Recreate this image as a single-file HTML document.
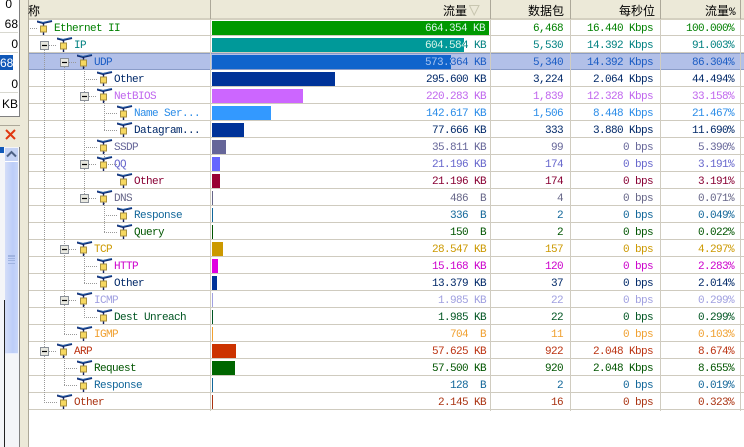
<!DOCTYPE html>
<html><head><meta charset="utf-8"><style>
html,body{margin:0;padding:0;background:#fff}
#p{position:relative;width:744px;height:447px;overflow:hidden;background:#fff;font:11px/17px "Liberation Mono","Noto Sans CJK SC",monospace;letter-spacing:-.6px}
#p div,#p svg{position:absolute}
.h{top:2px;height:17px;font:12px/17px "Noto Sans CJK SC","WenQuanYi Zen Hei",sans-serif;letter-spacing:0;color:#000;white-space:nowrap}
.r{left:29px;width:715px;height:16px;border-bottom:1px solid #cfcbbf}
.in{left:-29px;top:0;width:744px;height:16px}
.n,.a,.b2,.c,.d{white-space:pre;top:2px}
.a{right:258px}.b2{right:181px}.c{right:91px}.d{right:10px}
.bar{left:212px;top:2px;height:14px;overflow:hidden}
.bar span{position:absolute;left:213px;top:0;white-space:pre;color:#d8f4e8}
.vl{top:19px;width:1px;height:392px;background:#d0ccc0}
.hs{top:0;width:1px;height:19px;background:#aca899}
.lp{left:0;width:18px;height:16px;border-bottom:1px solid #d8d8d0;text-align:right;font:12px/17px "Liberation Sans",sans-serif;letter-spacing:0;color:#000}
</style></head><body><div id="p">
<svg width="0" height="0"><defs>
<symbol id="i" viewBox="0 0 16 16"><path d="M0 1.5 L6 3 L15 1" fill="none" stroke="#102a70" stroke-width="2"/><path d="M1 1 L6 2.5 L15 .5" fill="none" stroke="#3a8ad0" stroke-width=".5"/><path d="M6.5 3 V15" stroke="#102060" stroke-width="1.4"/><rect x="3.5" y="6" width="6" height="6" fill="#f6d860" stroke="#a89040"/></symbol>
<symbol id="m" viewBox="0 0 9 9"><rect x=".5" y=".5" width="8" height="8" fill="#e8e8e0" stroke="#8a9098"/><path d="M2 4.5H7" stroke="#000" stroke-width="1.2"/></symbol>
</defs></svg>

<!-- left panel -->
<div style="left:0;top:0;width:20px;height:447px;background:#ece9d8"></div>
<div style="left:0;top:0;width:19px;height:116px;background:#fff;border-right:1px solid #808080;border-bottom:1px solid #808080"></div>
<div class="lp" style="top:-4px;text-align:right;padding-right:1px;width:12px;left:0;border:0">0</div>
<div class="lp" style="top:16px;">68</div>
<div class="lp" style="top:36px">0</div>
<div class="lp" style="top:55px;background:#1058b8;color:#fff;width:13px;height:15px;left:0;border:0;line-height:16px">68</div>
<div class="lp" style="top:76px">0</div>
<div class="lp" style="top:96px;border:0">KB</div>
<div style="left:0;top:125px;width:20px;height:20px;background:#ece9d8;border-top:1px solid #aca899;border-right:1px solid #808080"></div>
<svg style="left:5px;top:129px" width="11" height="11" viewBox="0 0 11 11"><path d="M1 1L10 10M10 1L1 10" stroke="#e03810" stroke-width="2"/></svg>
<div style="left:0;top:147px;width:19px;height:300px;background:#f4f5f8;border-right:1px solid #808080"></div>
<div style="left:0;top:147px;width:4px;height:6px;background:#1058b8"></div>
<div style="left:4px;top:300px;width:1px;height:147px;background:#222"></div>
<div style="left:5px;top:148px;width:13px;height:205px;background:linear-gradient(90deg,#d4ddf8,#bccdf8 60%,#c8d6f8);border-bottom:1px solid #e8eeff"></div>
<div style="left:5px;top:148px;width:13px;height:13px;background:#c4d2f4;border-bottom:1px solid #fff"></div>
<svg style="left:6px;top:150px" width="11" height="8" viewBox="0 0 11 8"><path d="M1 6.5L5.5 2L10 6.5" fill="none" stroke="#4d6185" stroke-width="2"/></svg>
<div style="left:8px;top:255px;width:7px;height:7px;border-top:1px solid #9fb3e0;border-bottom:1px solid #9fb3e0;background:linear-gradient(#9fb3e0 0 1px,transparent 1px 2px,#9fb3e0 2px 3px,transparent 3px 4px,#9fb3e0 4px 5px,transparent 5px)"></div>
<div style="left:20px;top:0;width:8px;height:447px;background:#ece9d8;border-right:1px solid #aca899"></div>

<!-- header -->
<div style="left:29px;top:0;width:715px;height:18px;background:#ece9d8;border-bottom:2px solid #d4d0c0"></div>
<div class="hs" style="left:210px"></div><div class="hs" style="left:490px"></div><div class="hs" style="left:570px"></div><div class="hs" style="left:660px"></div><div class="hs" style="left:740px"></div>
<div class="h" style="left:28px">称</div>
<div class="h" style="left:443px">流量</div>
<svg style="left:469px;top:5px" width="11" height="11" viewBox="0 0 11 11"><path d="M.5 .5H10L5.2 10Z" fill="none" stroke="#c8c6b0"/></svg>
<div class="h" style="left:528px">数据包</div>
<div class="h" style="left:619px">每秒位</div>
<div class="h" style="left:705px">流量<span style="font:11px/17px 'Liberation Mono',monospace;letter-spacing:-.6px">%</span></div>

<!-- rows -->
<div class="r" style="top:19px;color:#008000"><div class="in"><div class="n" style="left:54px">Ethernet II</div><div class="a">664.354 KB</div><div class="bar" style="width:277px;background:#009900"><span>664.354 KB</span></div><div class="b2">6,468</div><div class="c">16.440 Kbps</div><div class="d">100.000%</div></div></div>
<div class="r" style="top:36px;color:#008080"><div class="in"><div class="n" style="left:74px">IP</div><div class="a">604.584 KB</div><div class="bar" style="width:252px;background:#009999"><span>604.584 KB</span></div><div class="b2">5,530</div><div class="c">14.392 Kbps</div><div class="d">91.003%</div></div></div>
<div class="r" style="top:53px;color:#1a5cc4;background:#b2c0e8;border-top:1px solid #8a9cc8;border-bottom:1px solid #8a9cc8;height:15px"><div class="in" style="top:-1px"><div class="n" style="left:94px">UDP</div><div class="a">573.364 KB</div><div class="bar" style="width:239px;background:#1064cc"><span style="color:#a8c4f0">573.364 KB</span></div><div class="b2">5,340</div><div class="c">14.392 Kbps</div><div class="d">86.304%</div></div></div>
<div class="r" style="top:70px;color:#002868"><div class="in"><div class="n" style="left:114px">Other</div><div class="a">295.600 KB</div><div class="bar" style="width:123px;background:#003399"></div><div class="b2">3,224</div><div class="c">2.064 Kbps</div><div class="d">44.494%</div></div></div>
<div class="r" style="top:87px;color:#c066ee"><div class="in"><div class="n" style="left:114px">NetBIOS</div><div class="a">220.283 KB</div><div class="bar" style="width:91px;background:#cc66ff"></div><div class="b2">1,839</div><div class="c">12.328 Kbps</div><div class="d">33.158%</div></div></div>
<div class="r" style="top:104px;color:#2a8ce8"><div class="in"><div class="n" style="left:134px">Name Ser...</div><div class="a">142.617 KB</div><div class="bar" style="width:59px;background:#3399ff"></div><div class="b2">1,506</div><div class="c">8.448 Kbps</div><div class="d">21.467%</div></div></div>
<div class="r" style="top:121px;color:#002868"><div class="in"><div class="n" style="left:134px">Datagram...</div><div class="a">77.666 KB</div><div class="bar" style="width:32px;background:#003399"></div><div class="b2">333</div><div class="c">3.880 Kbps</div><div class="d">11.690%</div></div></div>
<div class="r" style="top:138px;color:#666699"><div class="in"><div class="n" style="left:114px">SSDP</div><div class="a">35.811 KB</div><div class="bar" style="width:14px;background:#666699"></div><div class="b2">99</div><div class="c">0 bps</div><div class="d">5.390%</div></div></div>
<div class="r" style="top:155px;color:#6666cc"><div class="in"><div class="n" style="left:114px">QQ</div><div class="a">21.196 KB</div><div class="bar" style="width:8px;background:#6666ff"></div><div class="b2">174</div><div class="c">0 bps</div><div class="d">3.191%</div></div></div>
<div class="r" style="top:172px;color:#880033"><div class="in"><div class="n" style="left:134px">Other</div><div class="a">21.196 KB</div><div class="bar" style="width:8px;background:#990033"></div><div class="b2">174</div><div class="c">0 bps</div><div class="d">3.191%</div></div></div>
<div class="r" style="top:189px;color:#666688"><div class="in"><div class="n" style="left:114px">DNS</div><div class="a">486  B</div><div class="bar" style="width:1px;background:#666688"></div><div class="b2">4</div><div class="c">0 bps</div><div class="d">0.071%</div></div></div>
<div class="r" style="top:206px;color:#116699"><div class="in"><div class="n" style="left:134px">Response</div><div class="a">336  B</div><div class="bar" style="width:1px;background:#116699"></div><div class="b2">2</div><div class="c">0 bps</div><div class="d">0.049%</div></div></div>
<div class="r" style="top:223px;color:#005500"><div class="in"><div class="n" style="left:134px">Query</div><div class="a">150  B</div><div class="bar" style="width:1px;background:#005500"></div><div class="b2">2</div><div class="c">0 bps</div><div class="d">0.022%</div></div></div>
<div class="r" style="top:240px;color:#cc9900"><div class="in"><div class="n" style="left:94px">TCP</div><div class="a">28.547 KB</div><div class="bar" style="width:11px;background:#cc9900"></div><div class="b2">157</div><div class="c">0 bps</div><div class="d">4.297%</div></div></div>
<div class="r" style="top:257px;color:#cc00cc"><div class="in"><div class="n" style="left:114px">HTTP</div><div class="a">15.168 KB</div><div class="bar" style="width:6px;background:#e000e0"></div><div class="b2">120</div><div class="c">0 bps</div><div class="d">2.283%</div></div></div>
<div class="r" style="top:274px;color:#002868"><div class="in"><div class="n" style="left:114px">Other</div><div class="a">13.379 KB</div><div class="bar" style="width:5px;background:#003399"></div><div class="b2">37</div><div class="c">0 bps</div><div class="d">2.014%</div></div></div>
<div class="r" style="top:291px;color:#a0a0e0"><div class="in"><div class="n" style="left:94px">ICMP</div><div class="a">1.985 KB</div><div class="bar" style="width:1px;background:#a0a0e0"></div><div class="b2">22</div><div class="c">0 bps</div><div class="d">0.299%</div></div></div>
<div class="r" style="top:308px;color:#005522"><div class="in"><div class="n" style="left:114px">Dest Unreach</div><div class="a">1.985 KB</div><div class="bar" style="width:1px;background:#005522"></div><div class="b2">22</div><div class="c">0 bps</div><div class="d">0.299%</div></div></div>
<div class="r" style="top:325px;color:#f0a030"><div class="in"><div class="n" style="left:94px">IGMP</div><div class="a">704  B</div><div class="bar" style="width:1px;background:#f0a030"></div><div class="b2">11</div><div class="c">0 bps</div><div class="d">0.103%</div></div></div>
<div class="r" style="top:342px;color:#bb3311"><div class="in"><div class="n" style="left:74px">ARP</div><div class="a">57.625 KB</div><div class="bar" style="width:24px;background:#cc3300"></div><div class="b2">922</div><div class="c">2.048 Kbps</div><div class="d">8.674%</div></div></div>
<div class="r" style="top:359px;color:#005500"><div class="in"><div class="n" style="left:94px">Request</div><div class="a">57.500 KB</div><div class="bar" style="width:23px;background:#006600"></div><div class="b2">920</div><div class="c">2.048 Kbps</div><div class="d">8.655%</div></div></div>
<div class="r" style="top:376px;color:#116699"><div class="in"><div class="n" style="left:94px">Response</div><div class="a">128  B</div><div class="bar" style="width:1px;background:#116699"></div><div class="b2">2</div><div class="c">0 bps</div><div class="d">0.019%</div></div></div>
<div class="r" style="top:393px;color:#aa3311"><div class="in"><div class="n" style="left:74px">Other</div><div class="a">2.145 KB</div><div class="bar" style="width:1px;background:#aa3311"></div><div class="b2">16</div><div class="c">0 bps</div><div class="d">0.323%</div></div></div>

<div class="vl" style="left:210px"></div><div class="vl" style="left:490px"></div><div class="vl" style="left:570px"></div><div class="vl" style="left:660px"></div><div class="vl" style="left:740px"></div>

<!-- tree -->
<svg style="left:0;top:0" width="210" height="447" viewBox="0 0 210 447">
<g stroke="#999" stroke-width="1" stroke-dasharray="1 1" fill="none" shape-rendering="crispEdges">
<path d="M44.5 50V402M64.5 67V334M64.5 356V385M84.5 67V198M84.5 254V283M84.5 305V317M104.5 101V130M104.5 152V164M104.5 203V232"/>
<path d="M30 28.5H37M49 45.5H57M44 402.5H57M69 62.5H77M64 334.5H77M49 351.5H57M64 368.5H77M64 385.5H77M69 249.5H77M69 300.5H77M84 79.5H97M89 96.5H97M84 147.5H97M89 164.5H97M89 198.5H97M84 266.5H97M84 283.5H97M84 317.5H97M104 113.5H117M104 130.5H117M104 164.5H117M104 215.5H117M104 232.5H117"/>
</g>
<use href="#m" x="40" y="41" width="9" height="9"/><use href="#m" x="60" y="58" width="9" height="9"/><use href="#m" x="80" y="92" width="9" height="9"/><use href="#m" x="80" y="160" width="9" height="9"/><use href="#m" x="80" y="194" width="9" height="9"/><use href="#m" x="60" y="245" width="9" height="9"/><use href="#m" x="60" y="296" width="9" height="9"/><use href="#m" x="40" y="347" width="9" height="9"/>
<use href="#i" x="37" y="20" width="16" height="16"/><use href="#i" x="57" y="37" width="16" height="16"/><use href="#i" x="77" y="54" width="16" height="16"/><use href="#i" x="97" y="71" width="16" height="16"/><use href="#i" x="97" y="88" width="16" height="16"/><use href="#i" x="117" y="105" width="16" height="16"/><use href="#i" x="117" y="122" width="16" height="16"/><use href="#i" x="97" y="139" width="16" height="16"/><use href="#i" x="97" y="156" width="16" height="16"/><use href="#i" x="117" y="173" width="16" height="16"/><use href="#i" x="97" y="190" width="16" height="16"/><use href="#i" x="117" y="207" width="16" height="16"/><use href="#i" x="117" y="224" width="16" height="16"/><use href="#i" x="77" y="241" width="16" height="16"/><use href="#i" x="97" y="258" width="16" height="16"/><use href="#i" x="97" y="275" width="16" height="16"/><use href="#i" x="77" y="292" width="16" height="16"/><use href="#i" x="97" y="309" width="16" height="16"/><use href="#i" x="77" y="326" width="16" height="16"/><use href="#i" x="57" y="343" width="16" height="16"/><use href="#i" x="77" y="360" width="16" height="16"/><use href="#i" x="77" y="377" width="16" height="16"/><use href="#i" x="57" y="394" width="16" height="16"/>
</svg>
</div></body></html>
